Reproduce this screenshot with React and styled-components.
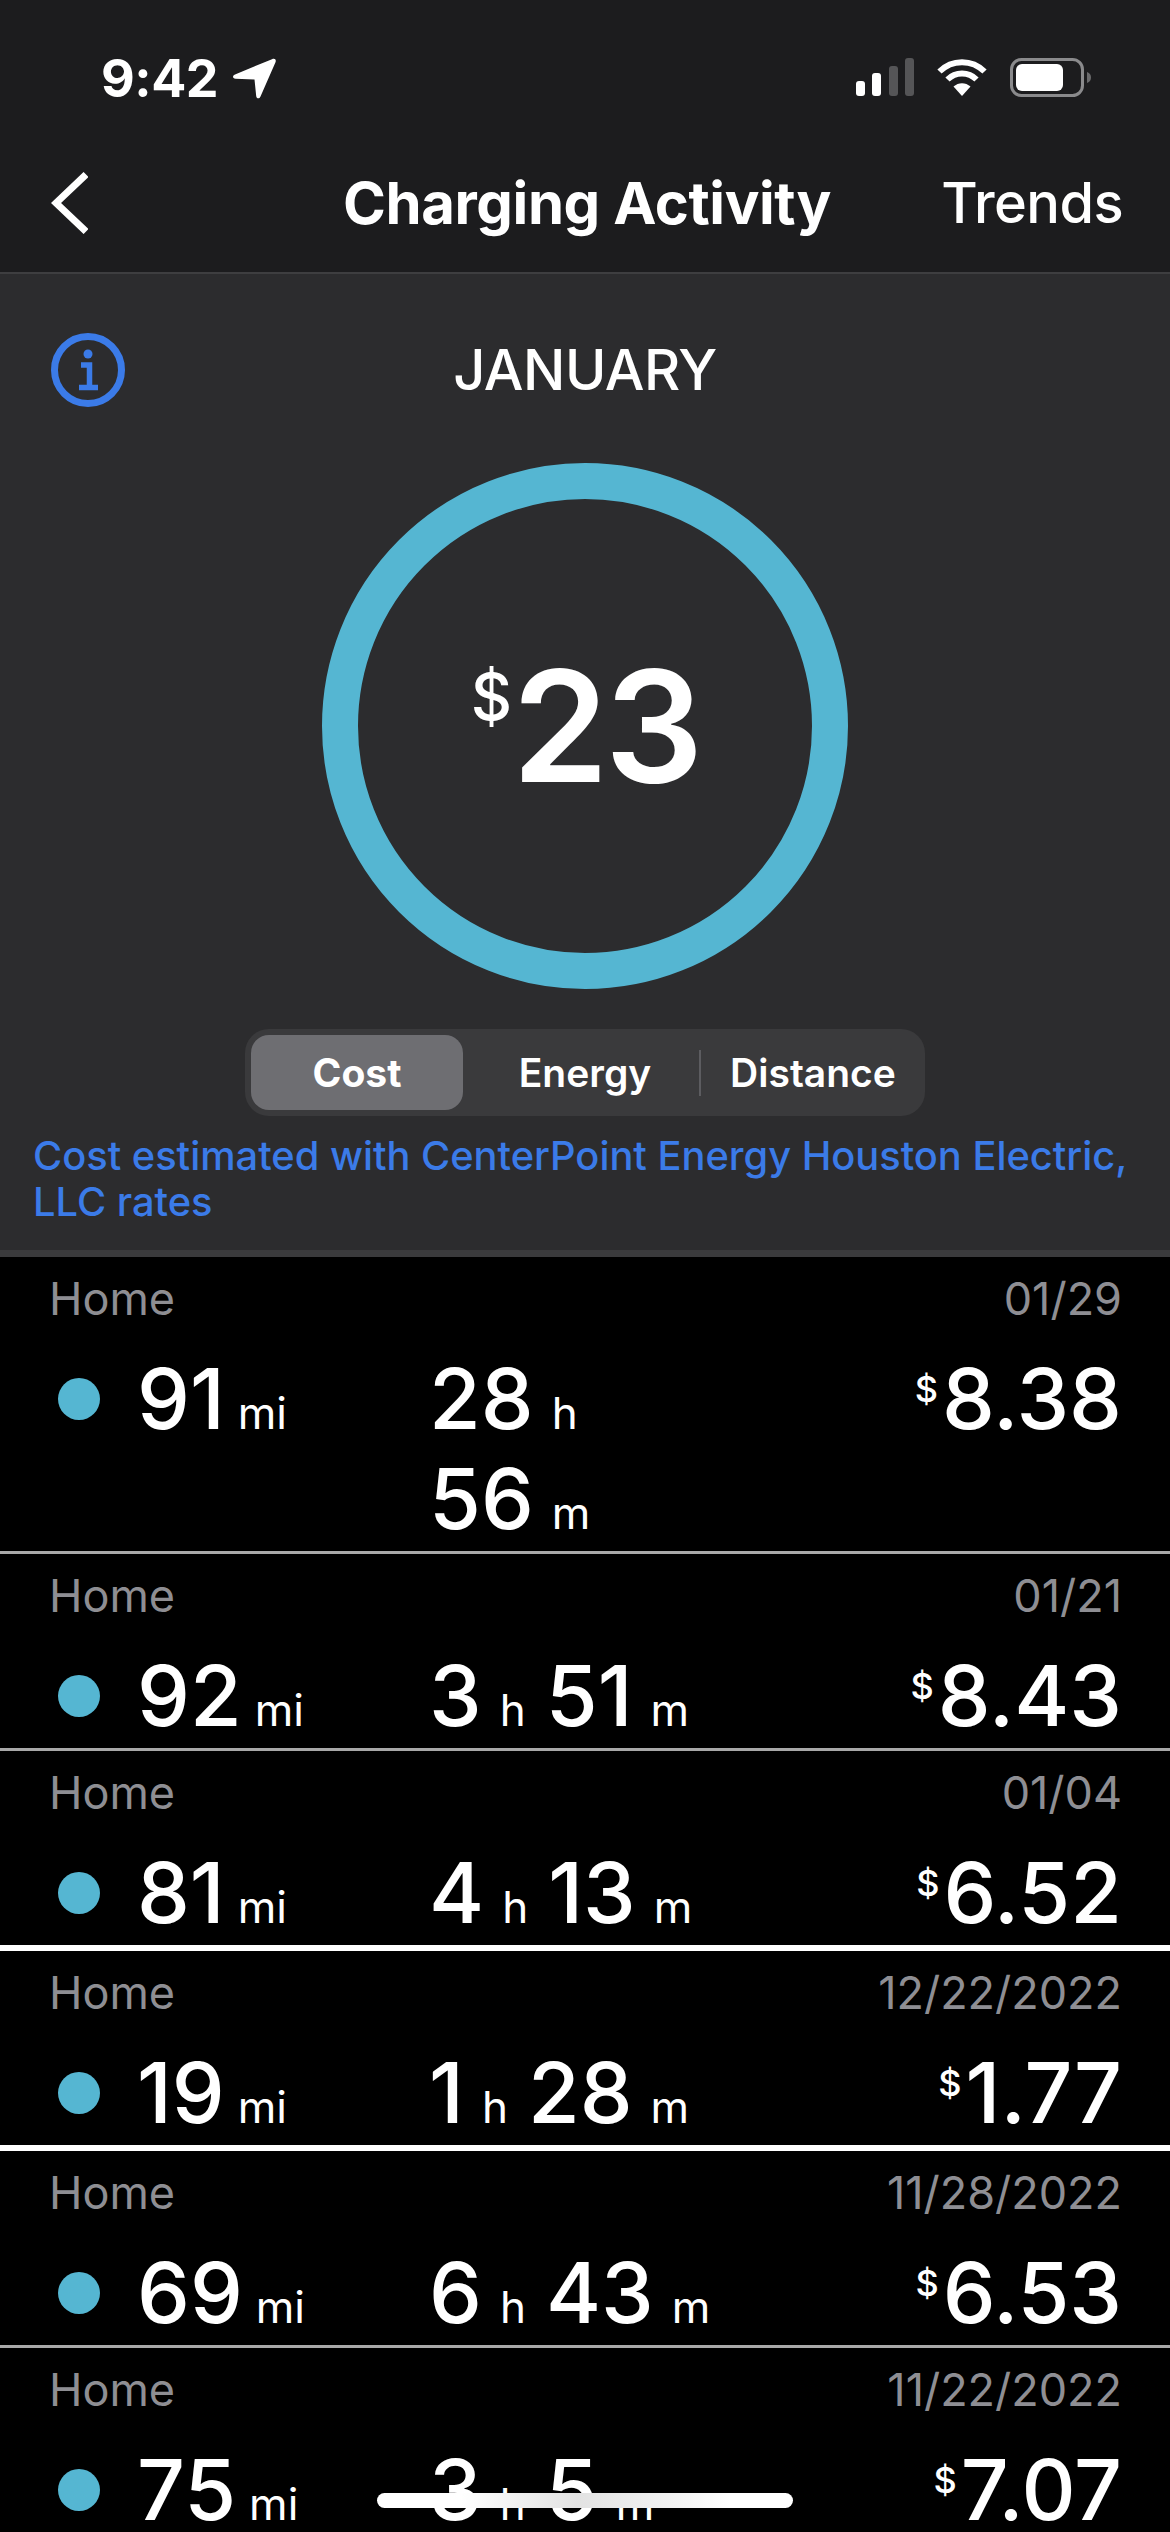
import React from "react";
import styled, { createGlobalStyle } from "styled-components";

const GlobalStyle = createGlobalStyle`
  html, body {
    margin: 0;
    padding: 0;
    background: #000;
  }
  * {
    box-sizing: border-box;
  }
`;

const Screen = styled.div`
  position: relative;
  width: 1170px;
  height: 2532px;
  overflow: hidden;
  background: #000;
  font-family: Inter, "Noto Sans", sans-serif;
  color: #fff;
`;

const TopBar = styled.header`
  height: 274px;
  background: #1c1c1e;
  border-bottom: 2px solid #3e3e40;
`;

const StatusBar = styled.div`
  height: 134px;
  padding: 58px 78px 0 101px;
  display: flex;
  justify-content: space-between;
  align-items: flex-start;
`;

const Clock = styled.div`
  display: flex;
  align-items: center;
  gap: 15px;
  font-size: 52px;
  line-height: 40px;
  font-weight: 700;
  letter-spacing: -0.5px;
`;

const StatusIcons = styled.div`
  display: flex;
  align-items: flex-start;
  gap: 23px;
`;

const Nav = styled.nav`
  height: 138px;
  padding: 0 47px 0 51px;
  display: grid;
  grid-template-columns: 1fr auto 1fr;
  align-items: center;
`;

const NavTitle = styled.div`
  font-size: 58px;
  font-weight: 700;
  letter-spacing: -0.4px;
`;

const NavAction = styled.div`
  justify-self: end;
  font-size: 56px;
  font-weight: 500;
  letter-spacing: -0.6px;
`;

const Panel = styled.section`
  background: #2c2c2e;
  border-bottom: 7px solid #3a3a3c;
  padding: 59px 0 25px;
  display: flex;
  flex-direction: column;
  align-items: center;
`;

const MonthRow = styled.div`
  width: 100%;
  height: 74px;
  padding: 0 51px;
  display: grid;
  grid-template-columns: 1fr auto 1fr;
  align-items: center;
`;

const Month = styled.div`
  font-size: 56px;
  font-weight: 500;
  letter-spacing: -0.5px;
`;

const Ring = styled.div`
  width: 526px;
  height: 526px;
  margin-top: 56px;
  border: 36px solid #55b6d2;
  border-radius: 50%;
  display: flex;
  align-items: center;
  justify-content: center;
`;

const HeroValue = styled.div`
  display: flex;
  align-items: flex-start;
  font-size: 155px;
  line-height: 180px;
  font-weight: 600;
  letter-spacing: -4px;
`;

const HeroSign = styled.span`
  font-size: 64px;
  line-height: 70px;
  margin-top: 26px;
  font-weight: 500;
  letter-spacing: 0;
`;

const Segments = styled.div`
  width: 680px;
  height: 87px;
  margin-top: 40px;
  padding: 6px;
  background: #3a3a3c;
  border-radius: 24px;
  display: flex;
  align-items: stretch;
`;

const Segment = styled.div`
  width: ${(p) => p.$width}px;
  padding-left: ${(p) => p.$inset || 0}px;
  display: flex;
  align-items: center;
  justify-content: center;
  font-size: 39px;
  font-weight: ${(p) => (p.$active ? 700 : 600)};
  background: ${(p) => (p.$active ? "#6e6e72" : "transparent")};
  border-radius: 18px;
`;

const SegmentDivider = styled.div`
  width: 2px;
  height: 46px;
  align-self: center;
  background: #5c5c60;
`;

const Note = styled.p`
  width: 100%;
  margin: 17px 0 0;
  padding: 0 33px;
  font-size: 39.8px;
  line-height: 46px;
  font-weight: 500;
  color: #3b7be8;
`;

const Row = styled.article`
  padding: 15px 48px 2px 49px;
  border-bottom: ${(p) => p.$rule};
`;

const RowHead = styled.div`
  height: 54px;
  display: flex;
  justify-content: space-between;
  align-items: center;
  font-size: 45px;
  line-height: 54px;
  color: #8e8e93;
`;

const RowBody = styled.div`
  margin-top: 23px;
  display: grid;
  grid-template-columns: 380px 1fr auto;
  align-items: start;
  font-size: 84px;
  line-height: 100px;
  font-weight: 500;
`;

const Distance = styled.div`
  display: flex;
  align-items: baseline;
  gap: 13px;
`;

const Dot = styled.span`
  width: 42px;
  height: 42px;
  margin: 0 24px 0 9px;
  border-radius: 50%;
  background: #55b6d2;
  align-self: center;
`;

const Duration = styled.div`
  max-width: 300px;
  display: flex;
  flex-wrap: wrap;
  column-gap: 20px;
`;

const Part = styled.span`
  display: inline-flex;
  align-items: baseline;
  gap: 18px;
`;

const Unit = styled.span`
  font-size: 44px;
  line-height: 1;
  font-weight: 400;
`;

const Amount = styled.div`
  display: flex;
  align-items: flex-start;
  gap: 4px;
`;

const Sign = styled.span`
  font-size: 36px;
  line-height: 40px;
  margin-top: 20px;
`;

const HomeBar = styled.div`
  position: absolute;
  left: 377px;
  top: 2493px;
  width: 416px;
  height: 15px;
  border-radius: 8px;
  background: linear-gradient(90deg, #fff 0%, #fff 20%, #e2e2e2 48%, #f2f2f2 70%, #fff 85%);
`;

const rows = [
  { date: "01/29", dist: "91", parts: [["28", "h"], ["56", "m"]], cost: "8.38", rule: "3px solid #a8a8a8" },
  { date: "01/21", dist: "92", parts: [["3", "h"], ["51", "m"]], cost: "8.43", rule: "3px solid #a8a8a8" },
  { date: "01/04", dist: "81", parts: [["4", "h"], ["13", "m"]], cost: "6.52", rule: "6px solid #fff" },
  { date: "12/22/2022", dist: "19", parts: [["1", "h"], ["28", "m"]], cost: "1.77", rule: "6px solid #fff" },
  { date: "11/28/2022", dist: "69", parts: [["6", "h"], ["43", "m"]], cost: "6.53", rule: "3px solid #a8a8a8" },
  { date: "11/22/2022", dist: "75", parts: [["3", "h"], ["5", "m"]], cost: "7.07", rule: "none" },
];

function LocationArrow() {
  return (
    <svg width="43" height="41" viewBox="0 0 43 41">
      <path
        d="M39 1.2C41.6 0 43.4 1.4 42.6 4L27.5 38.5C26.4 41.2 23.4 40.8 23.2 38L21.5 21.5L2.5 20.8C-0.6 20.6 -0.8 17.6 2 16.4Z"
        fill="#fff"
      />
    </svg>
  );
}

function SignalIcon() {
  return (
    <svg width="58" height="38" viewBox="0 0 58 38">
      <rect x="0" y="23" width="9" height="15" rx="3" fill="#fff" />
      <rect x="16" y="15" width="9" height="23" rx="3" fill="#fff" />
      <rect x="33" y="8" width="9" height="30" rx="3" fill="#555557" />
      <rect x="49" y="0" width="9" height="38" rx="3" fill="#555557" />
    </svg>
  );
}

function WifiIcon() {
  return (
    <svg width="50" height="38" viewBox="0 0 50 38" fill="none" stroke="#fff" strokeWidth="6">
      <path d="M2.5 13.5C15 1 35 1 47.5 13.5" />
      <path d="M10.5 21.5C18.5 13.5 31.5 13.5 39.5 21.5" />
      <path d="M25 38L16.5 28.5C21.5 24 28.5 24 33.5 28.5Z" fill="#fff" stroke="none" />
    </svg>
  );
}

function BatteryIcon() {
  return (
    <svg width="82" height="39" viewBox="0 0 82 39">
      <rect x="1.5" y="1.5" width="71" height="36" rx="10" fill="none" stroke="#8a8a8c" strokeWidth="3" />
      <rect x="6" y="6" width="47" height="27" rx="6" fill="#fff" />
      <path d="M77 14C80 15 81 17 81 19.5C81 22 80 24 77 25Z" fill="#6a6a6c" />
    </svg>
  );
}

function BackIcon() {
  return (
    <svg width="37" height="62" viewBox="0 0 37 62" fill="none" stroke="#fff" strokeWidth="7">
      <polyline points="35,2.5 5,31 35,59.5" />
    </svg>
  );
}

function InfoIcon() {
  return (
    <svg width="74" height="74" viewBox="0 0 74 74" fill="none">
      <circle cx="37" cy="37" r="33.5" stroke="#3b7be8" strokeWidth="7" />
      <circle cx="37" cy="21" r="4.5" fill="#3b7be8" />
      <path d="M30 32H38.5V53M28 54.5H47" stroke="#3b7be8" strokeWidth="5.5" />
    </svg>
  );
}

export default function App() {
  return (
    <Screen>
      <GlobalStyle />
      <TopBar>
        <StatusBar>
          <Clock>
            9:42
            <LocationArrow />
          </Clock>
          <StatusIcons>
            <SignalIcon />
            <WifiIcon />
            <BatteryIcon />
          </StatusIcons>
        </StatusBar>
        <Nav>
          <BackIcon />
          <NavTitle>Charging Activity</NavTitle>
          <NavAction>Trends</NavAction>
        </Nav>
      </TopBar>

      <Panel>
        <MonthRow>
          <InfoIcon />
          <Month>JANUARY</Month>
        </MonthRow>
        <Ring>
          <HeroValue>
            <HeroSign>$</HeroSign>
            23
          </HeroValue>
        </Ring>
        <Segments>
          <Segment $active $width={212}>Cost</Segment>
          <Segment $width={236} $inset={8}>Energy</Segment>
          <SegmentDivider />
          <Segment $width={218} $inset={6}>Distance</Segment>
        </Segments>
        <Note>Cost estimated with CenterPoint Energy Houston Electric, LLC rates</Note>
      </Panel>

      {rows.map((row) => (
        <Row key={row.date} $rule={row.rule}>
          <RowHead>
            <span>Home</span>
            <span>{row.date}</span>
          </RowHead>
          <RowBody>
            <Distance>
              <Dot />
              {row.dist}
              <Unit>mi</Unit>
            </Distance>
            <Duration>
              {row.parts.map(([value, unit]) => (
                <Part key={unit}>
                  {value}
                  <Unit>{unit}</Unit>
                </Part>
              ))}
            </Duration>
            <Amount>
              <Sign>$</Sign>
              {row.cost}
            </Amount>
          </RowBody>
        </Row>
      ))}

      <HomeBar />
    </Screen>
  );
}
